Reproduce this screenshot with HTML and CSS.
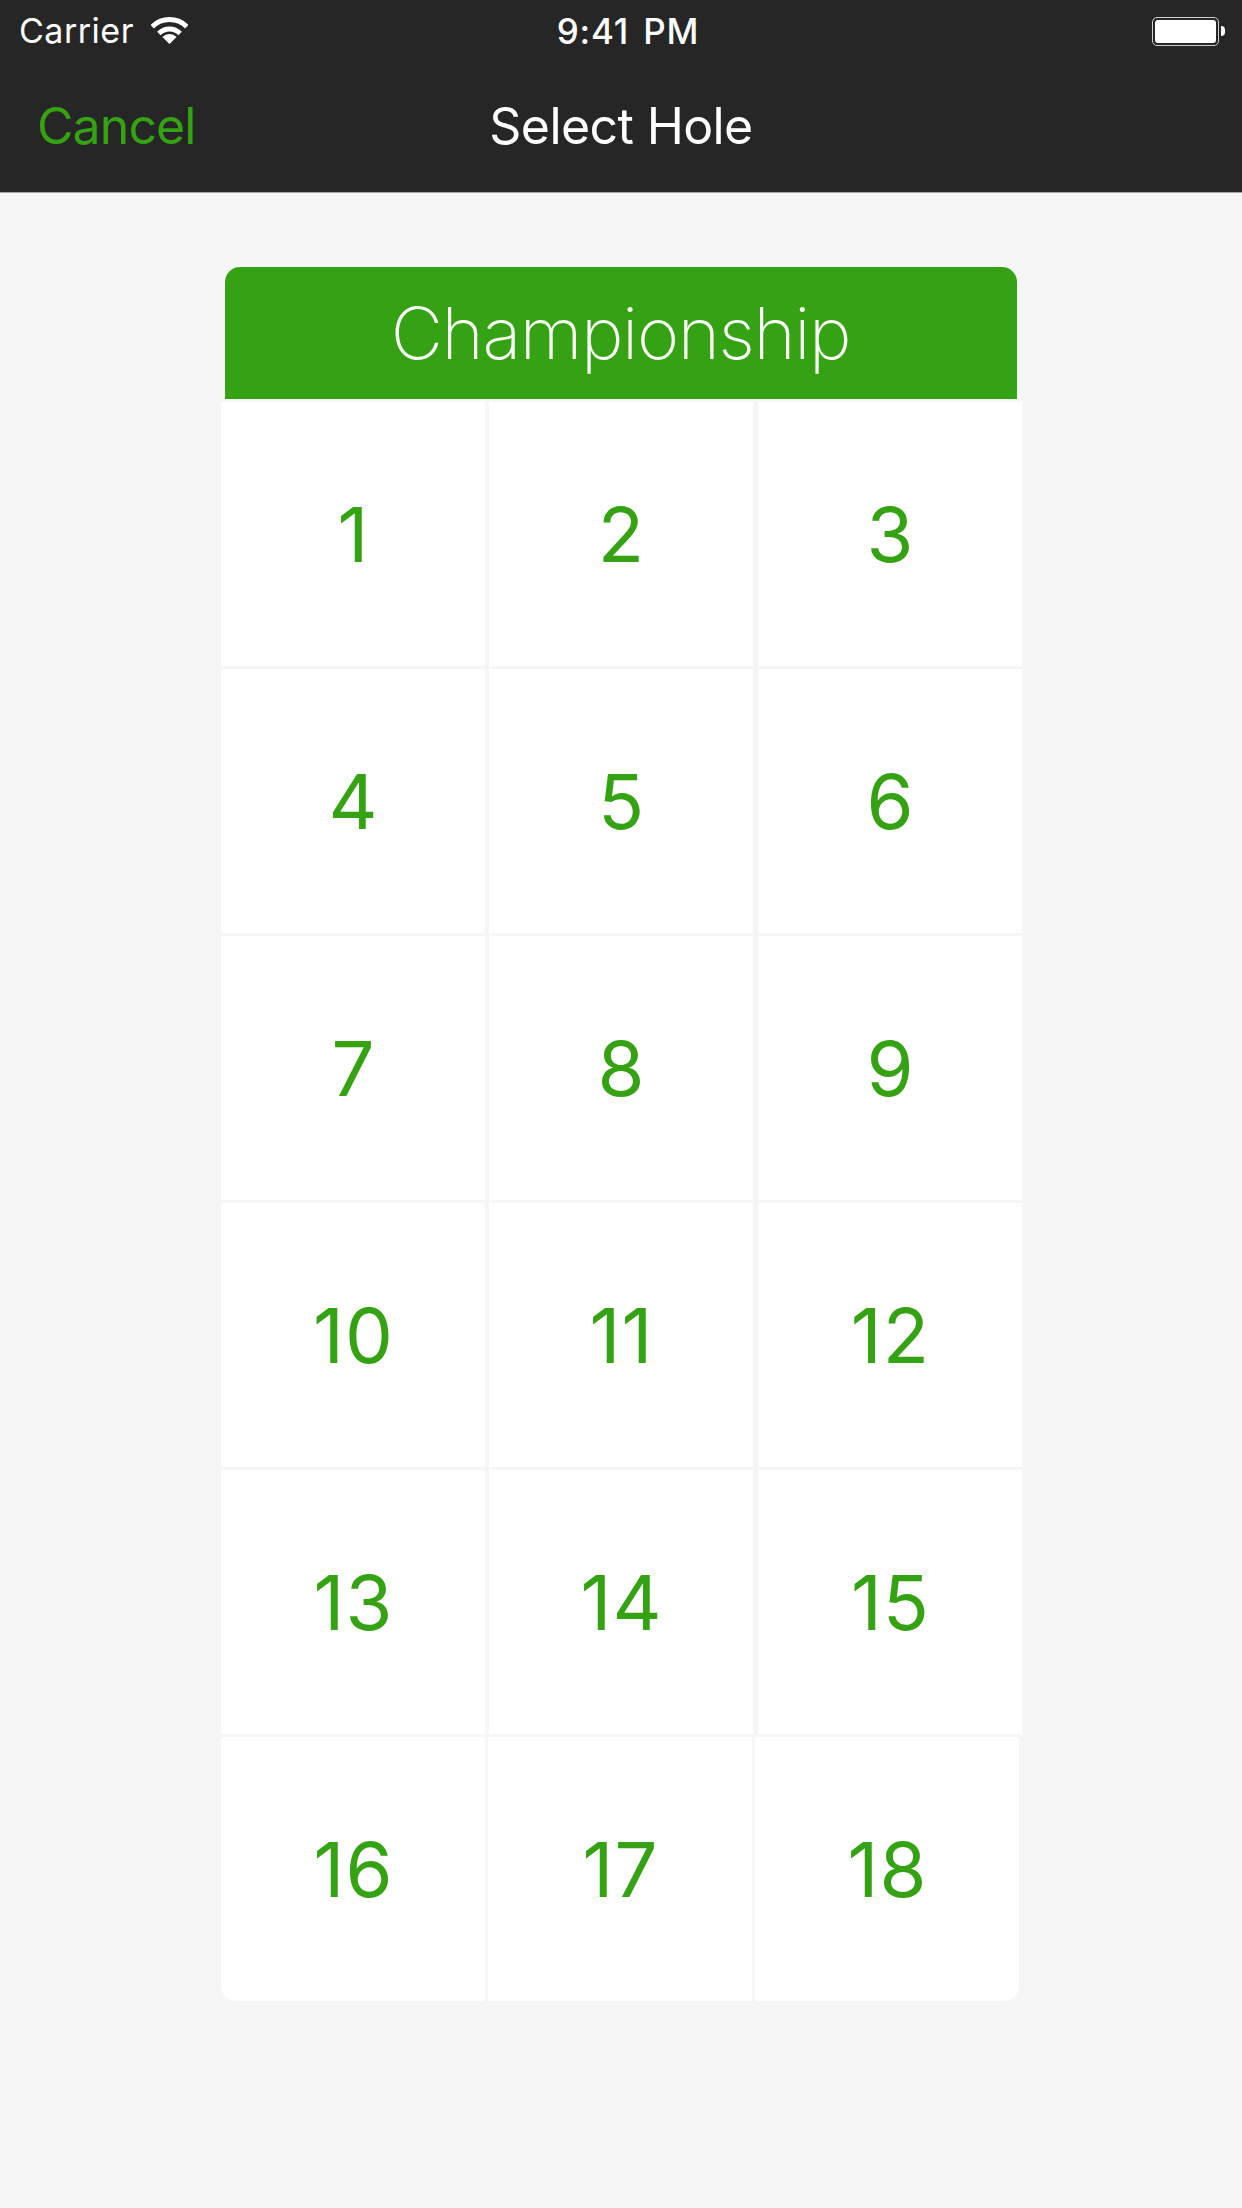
FILE: index.html
```html
<!DOCTYPE html>
<html>
<head>
	<meta charset="utf-8">
	<title>Select Hole</title>
	<link rel="stylesheet" href="styles.css">
</head>
<body>
<header class="top_bar">
	<div class="status_bar">
		<div class="status_left">
			<span class="carrier">Carrier</span>
			<svg class="wifi_icon" width="37" height="27" viewBox="0 0 37 27">
				<path d="M1.2 9.7A24.5 24.5 0 0 1 35.8 9.7" fill="none" stroke="#fff" stroke-width="5"/>
				<path d="M7.9 16.4A15 15 0 0 1 29.1 16.4" fill="none" stroke="#fff" stroke-width="5"/>
				<path d="M18.5 27L11.4 19.9A10 10 0 0 1 25.6 19.9Z" fill="#fff"/>
			</svg>
		</div>
		<div class="clock">9:41 PM</div>
		<div class="status_right">
			<div class="battery"><div class="battery_fill"></div></div>
			<div class="battery_nub"></div>
		</div>
	</div>
	<nav class="nav_bar">
		<a class="nav_cancel" href="#">Cancel</a>
		<div class="nav_title">Select Hole</div>
		<div></div>
	</nav>
</header>
<section class="hole_picker">
	<div class="picker_title">Championship</div>
	<div class="hole_row">
		<a class="hole" href="#">1</a>
		<a class="hole" href="#">2</a>
		<a class="hole" href="#">3</a>
	</div>
	<div class="hole_row">
		<a class="hole" href="#">4</a>
		<a class="hole" href="#">5</a>
		<a class="hole" href="#">6</a>
	</div>
	<div class="hole_row">
		<a class="hole" href="#">7</a>
		<a class="hole" href="#">8</a>
		<a class="hole" href="#">9</a>
	</div>
	<div class="hole_row">
		<a class="hole" href="#">10</a>
		<a class="hole" href="#">11</a>
		<a class="hole" href="#">12</a>
	</div>
	<div class="hole_row">
		<a class="hole" href="#">13</a>
		<a class="hole" href="#">14</a>
		<a class="hole" href="#">15</a>
	</div>
	<div class="hole_row hole_row_last">
		<a class="hole" href="#">16</a>
		<a class="hole" href="#">17</a>
		<a class="hole" href="#">18</a>
	</div>
</section>
</body>
</html>
```

FILE: styles.css
```css
html, body{
	margin:0;
	padding:0;
	height:100%;
	background:#f6f6f6;
	font-family: "Inter", "Liberation Sans", sans-serif;
}
a{
	text-decoration:none;
}
.top_bar{
	background:#262626;
	border-bottom:1px solid #a6a6a6;
	color:#fff;
}
.status_bar{
	display:grid;
	grid-template-columns:1fr auto 1fr;
	align-items:center;
	height:60px;
	padding:0 17px 0 19px;
}
.status_left{
	display:flex;
	align-items:center;
	gap:17px;
	height:60px;
}
.carrier{
	font-size:34px;
	letter-spacing:0.5px;
	line-height:62px;
}
.wifi_icon{
	margin-bottom:1px;
}
.clock{
	margin-left:12px;
	font-size:35px;
	font-weight:500;
	letter-spacing:0.8px;
	word-spacing:4px;
	line-height:62px;
}
.status_right{
	display:flex;
	align-items:center;
	justify-content:flex-end;
	gap:2px;
	height:60px;
}
.battery{
	box-sizing:border-box;
	width:67px;
	height:29px;
	padding:2px;
	border:1px solid #cfcfcf;
	border-radius:5px;
}
.battery_fill{
	height:100%;
	background:#fff;
	border-radius:3px;
}
.battery_nub{
	width:4px;
	height:10px;
	background:#fff;
	border-radius:0 4px 4px 0;
}
.nav_bar{
	display:grid;
	grid-template-columns:1fr auto 1fr;
	align-items:center;
	height:132px;
	padding:0 37px;
}
.nav_cancel{
	font-size:50px;
	letter-spacing:-0.9px;
	color:#35a213;
}
.nav_title{
	font-size:50px;
	letter-spacing:-0.6px;
	color:#fff;
}
.hole_picker{
	display:flex;
	flex-direction:column;
	align-items:center;
	gap:3px;
	width:801px;
	margin:74px auto 0;
}
.picker_title{
	box-sizing:border-box;
	width:792px;
	height:132px;
	line-height:132px;
	padding-right:1px;
	background:#35a213;
	border-radius:15px 15px 0 0;
	color:#fff;
	font-size:72px;
	font-weight:150;
	letter-spacing:-1.4px;
	text-align:center;
}
.hole_row{
	display:flex;
	gap:4px;
	width:100%;
}
.hole{
	display:flex;
	align-items:center;
	justify-content:center;
	box-sizing:border-box;
	width:264px;
	height:264px;
	padding-left:2px;
	background:#fff;
	color:#35a213;
	font-size:76px;
	letter-spacing:1px;
}
.hole:last-child{
	margin-left:1px;
}
.hole_row_last{
	gap:3px;
}
.hole_row_last .hole:last-child{
	margin-left:0;
	border-radius:0 0 15px 0;
}
.hole_row_last .hole:first-child{
	border-radius:0 0 0 15px;
}
```
